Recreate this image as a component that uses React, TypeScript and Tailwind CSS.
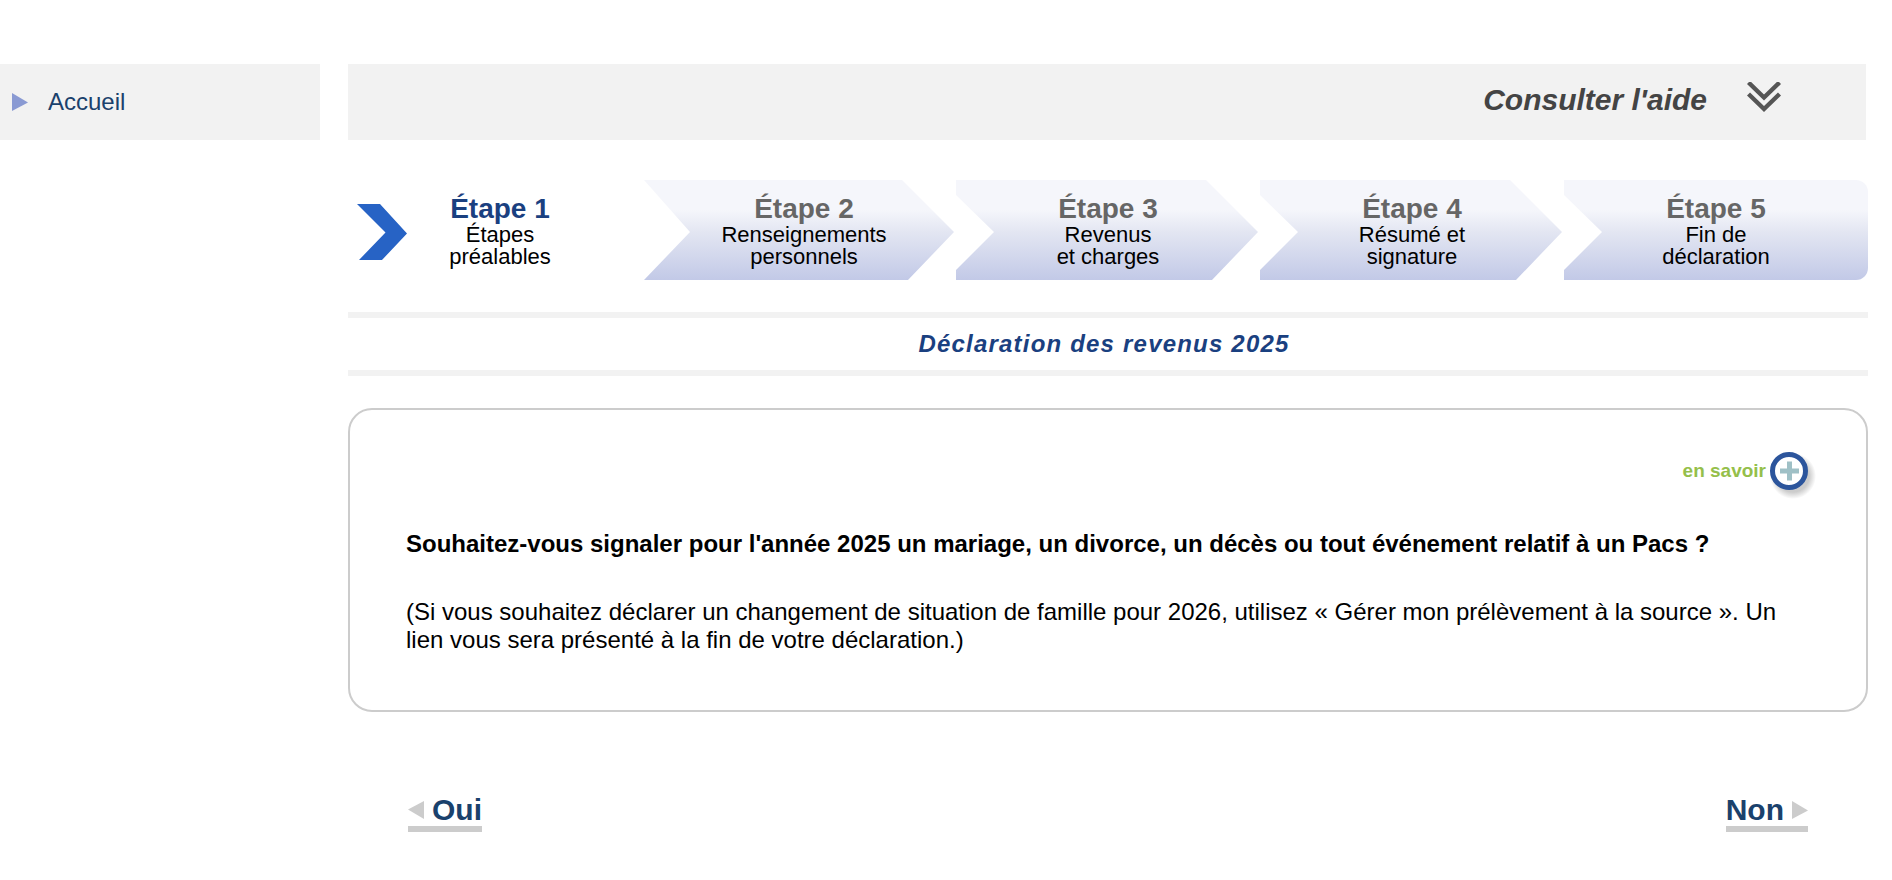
import React from 'react';
import clsx from 'clsx';

interface Step {
  title: string;
  lines: [string, string];
  shape?: string;
}

const MIDDLE_SHAPE =
  'inset-x-0 [clip-path:polygon(0_0,calc(100%_-_54px)_0,calc(100%_-_2px)_52px,calc(100%_-_48px)_100%,0_100%,0_90px,38px_52px,0_15px)]';

const steps: Step[] = [
  { title: 'Étape 1', lines: ['Étapes', 'préalables'] },
  {
    title: 'Étape 2',
    lines: ['Renseignements', 'personnels'],
    shape:
      '-left-2 right-0 [clip-path:polygon(0_0,calc(100%_-_54px)_0,calc(100%_-_2px)_52px,calc(100%_-_48px)_100%,0_100%,46px_52px)]',
  },
  { title: 'Étape 3', lines: ['Revenus', 'et charges'], shape: MIDDLE_SHAPE },
  { title: 'Étape 4', lines: ['Résumé et', 'signature'], shape: MIDDLE_SHAPE },
  {
    title: 'Étape 5',
    lines: ['Fin de', 'déclaration'],
    shape: 'inset-x-0 rounded-r-xl [clip-path:polygon(0_0,100%_0,100%_100%,0_100%,0_90px,38px_52px,0_15px)]',
  },
];

function Triangle({ className }: { className?: string }) {
  return (
    <svg viewBox="0 0 16 18" className={clsx('h-[18px] w-4 shrink-0', className)} fill="currentColor" aria-hidden="true">
      <path d="M0 0 L16 9.5 L0 18 Z" />
    </svg>
  );
}

function StepItem({ step }: { step: Step }) {
  const current = !step.shape;

  return (
    <li className="relative h-[100px] flex-1 pt-[14px] text-center" aria-current={current ? 'step' : undefined}>
      {current ? (
        <svg viewBox="0 0 50 56" className="absolute left-[9px] top-6 h-14 w-[50px]" aria-hidden="true">
          <path d="M0 0 H23 L50 29.5 L25 56 H2 L28.5 28.5 Z" fill="#2763c5" />
        </svg>
      ) : (
        <div
          className={clsx(
            'absolute inset-y-0 bg-[linear-gradient(to_bottom,#f5f6fb_0%,#f5f6fb_30%,#e3e6f2_52%,#c2c9e7_100%)]',
            step.shape
          )}
        />
      )}
      <div className="relative">
        <p className={clsx('text-[28px] leading-[30px] font-bold', current ? 'text-[#1a4080]' : 'text-[#666]')}>{step.title}</p>
        <p className="text-[22px] leading-[22px] text-black">
          {step.lines[0]}
          <br />
          {step.lines[1]}
        </p>
      </div>
    </li>
  );
}

export default function App() {
  return (
    <div className="flex items-start gap-7 bg-white pt-16 pr-6 pb-12 font-['Liberation_Sans',Arial,sans-serif] text-black">
      <nav className="w-80 shrink-0 bg-[#f2f2f2]">
        <a href="#accueil" className="flex h-[76px] items-center gap-5 pl-3 text-2xl leading-7 text-[#1a416c]">
          <Triangle className="text-[#8a9ad3]" />
          Accueil
        </a>
      </nav>

      <main className="min-w-0 flex-1">
        <div className="mr-0.5 flex h-[76px] items-start justify-end bg-[#f2f2f2] pt-[18px] pr-[85px]">
          <button type="button" className="flex items-start gap-10 text-3xl leading-9 font-bold text-[#444] italic">
            Consulter l'aide
            <svg viewBox="0 0 34 31" className="h-[31px] w-[34px]" fill="none" stroke="#555" strokeWidth="4.4" aria-hidden="true">
              <path d="M1.5 0.5 L17 15.5 L32.5 0.5 M1.5 12 L17 27 L32.5 12" />
            </svg>
          </button>
        </div>

        <ol className="mt-10 flex">
          {steps.map(step => (
            <StepItem key={step.title} step={step} />
          ))}
        </ol>

        <h1 className="mt-8 border-y-6 border-[#f2f2f2] py-3 pr-2 text-center text-2xl leading-7 font-bold tracking-wider text-[#1a4080] italic">
          Déclaration des revenus 2025
        </h1>

        <section className="mt-8 rounded-3xl border-2 border-[#ccc] px-14 pt-[42px] pb-14 text-2xl leading-7">
          <div className="flex justify-end">
            <a href="#en-savoir-plus" className="flex items-center gap-1 text-[19px] font-bold text-[#95bf4b]">
              en savoir
              <svg viewBox="0 0 40 38" className="h-[38px] w-10 overflow-visible" aria-label="plus">
                <defs>
                  <radialGradient id="shadow">
                    <stop offset="0.7" stopColor="#999" stopOpacity="0.5" />
                    <stop offset="1" stopColor="#999" stopOpacity="0" />
                  </radialGradient>
                </defs>
                <circle cx="23" cy="24" r="23" fill="url(#shadow)" />
                <circle cx="19" cy="19" r="16.5" fill="#fff" stroke="#2c559c" strokeWidth="5" />
                <path d="M19.5 9.5 V28.5 M10 19 H29" stroke="#9fc0c6" strokeWidth="5" />
              </svg>
            </a>
          </div>
          <h2 className="mt-10 font-bold">
            Souhaitez-vous signaler pour l'année 2025 un mariage, un divorce, un décès ou tout événement relatif à un Pacs ?
          </h2>
          <p className="mt-10">
            (Si vous souhaitez déclarer un changement de situation de famille pour 2026, utilisez « Gérer mon prélèvement à la
            source ». Un lien vous sera présenté à la fin de votre déclaration.)
          </p>
        </section>

        <div className="mt-[82px] flex justify-between px-[60px] text-3xl leading-8 font-bold text-[#1a416c]">
          <a href="#oui" className="flex items-center gap-2 border-b-6 border-[#ccc] leading-8">
            <Triangle className="rotate-180 text-[#ccc]" />
            Oui
          </a>
          <a href="#non" className="flex items-center gap-2 border-b-6 border-[#ccc] leading-8">
            Non
            <Triangle className="text-[#ccc]" />
          </a>
        </div>
      </main>
    </div>
  );
}
